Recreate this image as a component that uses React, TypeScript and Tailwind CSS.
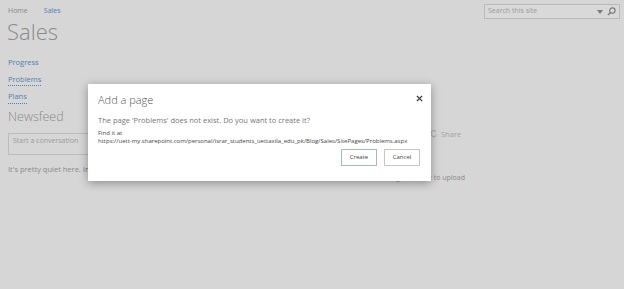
import React from 'react';

const font = { fontFamily: '"Open Sans", "Noto Sans", sans-serif' };

// === Page behind the dialog ===
//=====================================
const SitePage: React.FC = () => {
    return (
        <div className="flex flex-col">
            <div className="flex items-start justify-between pl-[8px] pr-[4px] pt-[4px]">
                <div className="flex gap-[16px] pt-[1px] text-[7px] leading-[12px]">
                    <span className="text-[#8a8a8a]">Home</span>
                    <span className="text-[#4f7fae]">Sales</span>
                </div>
                <div className="flex h-[15px] w-[136px] items-center border border-[#b9b9b9] bg-[#d9d9d9] pl-[3px] pr-[3px]">
                    <span className="flex-1 text-[7px] text-[#9a9a9a]">Search this site</span>
                    <svg width="6" height="4" viewBox="0 0 6 4" className="mr-[4px]">
                        <path d="M0 0h6L3 4z" fill="#7a7a7a" />
                    </svg>
                    <svg width="9" height="9" viewBox="0 0 10 10">
                        <circle cx="6" cy="4" r="3" fill="none" stroke="#7a7a7a" strokeWidth="1.3" />
                        <path d="M4 6L1 9" stroke="#7a7a7a" strokeWidth="1.5" />
                    </svg>
                </div>
            </div>

            <h1 className="pl-[7px] text-[22px] font-light leading-[26px] text-[#8a8a8a] -mt-[1px]">Sales</h1>

            <div className="flex">
                <div className="flex w-[425px] flex-col pl-[8px]">
                    <div className="mt-[13px] flex flex-col gap-[5px] text-[7.5px] leading-[11.5px] text-[#4f7fae]">
                        <span>Progress</span>
                        <span className="self-start border-b border-dotted border-[#4f7fae]">Problems</span>
                        <span className="self-start border-b border-dotted border-[#4f7fae]">Plans</span>
                    </div>
                    <div className="mt-[5px] text-[12.5px] font-light leading-[16px] text-[#8a8a8a]">Newsfeed</div>
                    <div className="mt-[8px] h-[22px] w-[330px] border border-[#bcbcbc] px-[4px] pt-[2px] text-[7px] text-[#9a9a9a]">
                        Start a conversation
                    </div>
                    <div className="mt-[9px] text-[7.5px] text-[#8a8a8a]">
                        It's pretty quiet here. <span className="text-[#4f7fae]">Invite more people to the site</span>, or start a conversation.
                    </div>
                </div>
                <div className="flex flex-col">
                    <div className="mt-[85px] flex items-center gap-[3px] pl-[6px] text-[7.5px] leading-[10px] text-[#a3a3a3]">
                        <svg width="7" height="8" viewBox="0 0 7 8">
                            <path d="M5 1.5A3 3 0 1 0 5.5 5" fill="none" stroke="#a3a3a3" strokeWidth="1" />
                        </svg>
                        <span>Share</span>
                    </div>
                    <div className="-ml-[60px] mt-[34px] w-[100px] text-right text-[7px] leading-[10px] text-[#8a8a8a]">
                        Drag files here to upload
                    </div>
                </div>
            </div>
        </div>
    );
};

// === Add a page dialog ===
//=====================================
const AddPageDialog: React.FC = () => {
    return (
        <div className="absolute left-[88px] top-[84px] flex h-[97px] w-[343px] flex-col bg-white pl-[10px] pr-[11px] shadow-[0_2px_9px_rgba(0,0,0,0.35)]">
            <div className="flex items-start justify-between pt-[8px]">
                <span className="text-[11px] font-light leading-[16px] text-[#555]">Add a page</span>
                <svg width="7" height="7" viewBox="0 0 8 8" className="-mr-[3px] mt-[3px]">
                    <path d="M1 1l6 6M7 1L1 7" stroke="#333" strokeWidth="1.5" />
                </svg>
            </div>
            <div className="mt-[7px] text-[7.5px] leading-[11px] text-[#777]">
                The page 'Problems' does not exist. Do you want to create it?
            </div>
            <div className="mt-[3px] text-[6px] leading-[8px] text-[#444]">Find it at</div>
            <div className="whitespace-nowrap text-[6px] leading-[8px] text-[#444]">
                https://uett-my.sharepoint.com/personal/israr_students_uettaxila_edu_pk/Blog/Sales/SitePages/Problems.aspx
            </div>
            <div className="mt-[4px] flex justify-end gap-[7px]">
                <button className="h-[17px] w-[36px] border border-[#9fb8dc] bg-white text-[6px] text-[#444]">Create</button>
                <button className="h-[17px] w-[36px] border border-[#c6c6c6] bg-white text-[6px] text-[#444]">Cancel</button>
            </div>
        </div>
    );
};

const App: React.FC = () => {
    return (
        <div className="relative h-[289px] w-[624px] overflow-hidden bg-[#d6d6d6]" style={font}>
            <SitePage />
            <AddPageDialog />
        </div>
    );
};

export default App;
